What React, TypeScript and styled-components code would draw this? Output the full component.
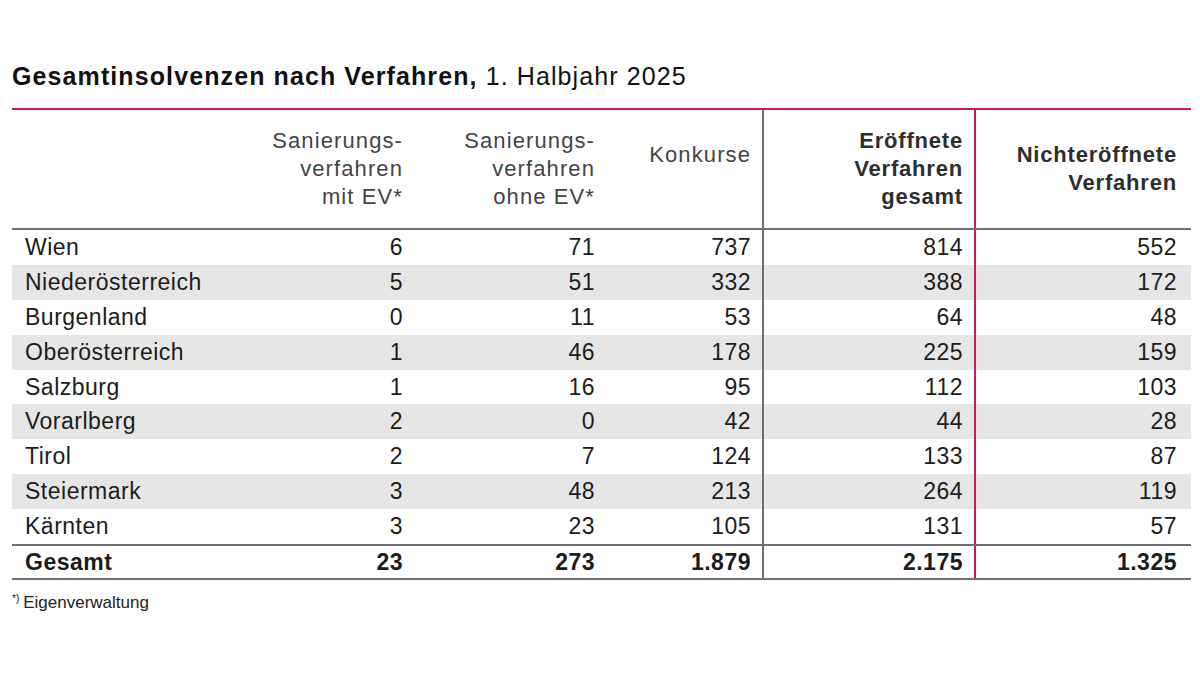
import React from 'react';
import styled, { createGlobalStyle } from 'styled-components';

const GlobalStyle = createGlobalStyle`
    body {
        margin: 0;
        background: #fff;
        font-family: "Liberation Sans", Arial, sans-serif;
        color: #1c1c1c;
    }
`;

const COLS = '238px 165px 192px 157px 212px 215px';
const PINK = '#d4145a';
const GRAY = '#707070';

const Page = styled.div`
    width: 1200px;
    height: 675px;
    box-sizing: border-box;
    padding: 61px 0 0 12px;
`;

const Title = styled.h1`
    margin: 0 0 17px;
    font-size: 25px;
    line-height: 30px;
    font-weight: normal;
    letter-spacing: 1.1px;
    color: #111;
    b {
        font-weight: bold;
    }
`;

const Table = styled.div`
    width: 1179px;
    border-top: 2px solid ${PINK};
`;

const Row = styled.div<{ $shade?: boolean; $rule?: boolean }>`
    display: grid;
    grid-template-columns: ${COLS};
    background: ${(p) => (p.$shade ? '#e6e6e6' : 'transparent')};
    border-bottom: ${(p) => (p.$rule ? `2px solid ${GRAY}` : 'none')};
`;

const Cell = styled.div<{ $line?: 'gray' | 'pink'; $pad?: number; $bold?: boolean; $label?: boolean }>`
    box-sizing: border-box;
    height: 34.9px;
    display: flex;
    align-items: center;
    justify-content: ${(p) => (p.$label ? 'flex-start' : 'flex-end')};
    padding: ${(p) => (p.$label ? '0 0 0 13px' : `0 ${p.$pad ?? 12}px 0 0`)};
    border-right: ${(p) => (p.$line === 'gray' ? `2px solid ${GRAY}` : p.$line === 'pink' ? `2px solid ${PINK}` : 'none')};
    font-size: 23px;
    letter-spacing: 0.5px;
    font-weight: ${(p) => (p.$bold ? 'bold' : 'normal')};
    color: #1c1c1c;
    white-space: nowrap;
`;

const TotalCell = styled(Cell)`
    height: 32px;
`;

const HeadCell = styled.div<{ $line?: 'gray' | 'pink'; $pad?: number; $bold?: boolean; $top?: boolean }>`
    box-sizing: border-box;
    height: 118px;
    display: flex;
    flex-direction: column;
    justify-content: ${(p) => (p.$top ? 'flex-start' : 'center')};
    padding: ${(p) => (p.$top ? '31px' : '0')} ${(p) => p.$pad ?? 12}px 0 0;
    text-align: right;
    border-right: ${(p) => (p.$line === 'gray' ? `2px solid ${GRAY}` : p.$line === 'pink' ? `2px solid ${PINK}` : 'none')};
    font-size: 22px;
    line-height: 28px;
    letter-spacing: ${(p) => (p.$bold ? '0.8px' : '1.1px')};
    font-weight: ${(p) => (p.$bold ? 'bold' : 'normal')};
    color: ${(p) => (p.$bold ? '#2e2e2e' : '#444')};
`;

const Footnote = styled.p`
    margin: 9px 0 0;
    font-size: 17px;
    line-height: 20px;
    color: #222;
    sup {
        font-size: 10px;
        vertical-align: 6px;
        margin-right: 4px;
    }
`;

type Region = [string, number, number, number, number, number];

const rows: Region[] = [
    ['Wien', 6, 71, 737, 814, 552],
    ['Niederösterreich', 5, 51, 332, 388, 172],
    ['Burgenland', 0, 11, 53, 64, 48],
    ['Oberösterreich', 1, 46, 178, 225, 159],
    ['Salzburg', 1, 16, 95, 112, 103],
    ['Vorarlberg', 2, 0, 42, 44, 28],
    ['Tirol', 2, 7, 124, 133, 87],
    ['Steiermark', 3, 48, 213, 264, 119],
    ['Kärnten', 3, 23, 105, 131, 57],
];

const App: React.FC = () => {
    return (
        <>
            <GlobalStyle />
            <Page>
                <Title>
                    <b>Gesamtinsolvenzen nach Verfahren,</b> 1. Halbjahr 2025
                </Title>
                <Table>
                    <Row $rule>
                        <HeadCell />
                        <HeadCell>
                            <span>Sanierungs-</span>
                            <span>verfahren</span>
                            <span>mit EV*</span>
                        </HeadCell>
                        <HeadCell>
                            <span>Sanierungs-</span>
                            <span>verfahren</span>
                            <span>ohne EV*</span>
                        </HeadCell>
                        <HeadCell $line="gray" $pad={11} $top>
                            <span>Konkurse</span>
                        </HeadCell>
                        <HeadCell $line="pink" $pad={11} $bold>
                            <span>Eröffnete</span>
                            <span>Verfahren</span>
                            <span>gesamt</span>
                        </HeadCell>
                        <HeadCell $pad={14} $bold>
                            <span>Nichteröffnete</span>
                            <span>Verfahren</span>
                        </HeadCell>
                    </Row>
                    {rows.map(([name, a, b, c, d, e], i) => (
                        <Row key={name} $shade={i % 2 === 1} $rule={i === rows.length - 1}>
                            <Cell $label>{name}</Cell>
                            <Cell>{a}</Cell>
                            <Cell>{b}</Cell>
                            <Cell $line="gray" $pad={11}>{c}</Cell>
                            <Cell $line="pink" $pad={11}>{d}</Cell>
                            <Cell $pad={14}>{e}</Cell>
                        </Row>
                    ))}
                    <Row $rule>
                        <TotalCell $label $bold>Gesamt</TotalCell>
                        <TotalCell $bold>23</TotalCell>
                        <TotalCell $bold>273</TotalCell>
                        <TotalCell $line="gray" $pad={11} $bold>1.879</TotalCell>
                        <TotalCell $line="pink" $pad={11} $bold>2.175</TotalCell>
                        <TotalCell $pad={14} $bold>1.325</TotalCell>
                    </Row>
                </Table>
                <Footnote>
                    <sup>*)</sup>Eigenverwaltung
                </Footnote>
            </Page>
        </>
    );
};

export default App;
